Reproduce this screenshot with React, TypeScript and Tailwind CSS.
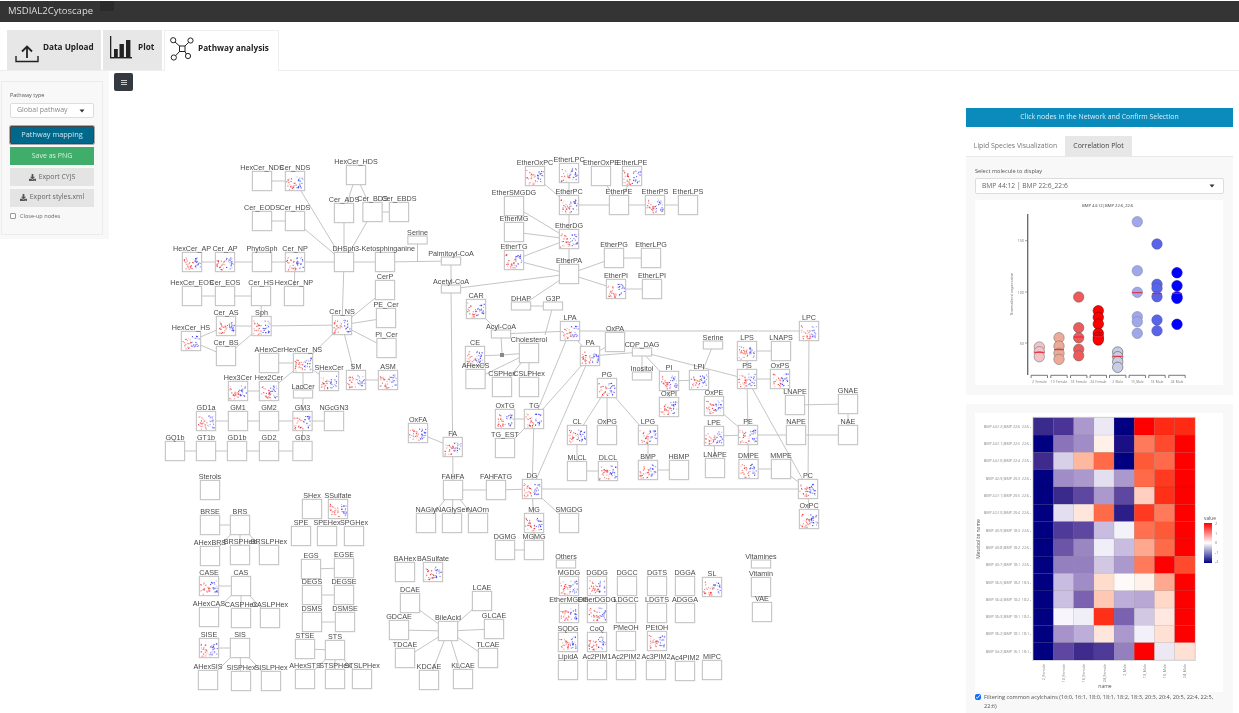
import { FaDownload } from 'react-icons/fa';

type Kind = 'p' | 's' | undefined;
type NodeRow = [string, number, number, Kind?];

// id, centre x, centre y, kind (p = has mini plot, s = flat box). '#2' only makes an id unique
const nodes: NodeRow[] = [
  ['HexCer_NDS', 262, 183], ['Cer_NDS', 295, 183, 'p'], ['HexCer_HDS', 356, 177], ['Cer_ADS', 344, 215],
  ['Cer_BDS', 372.5, 214], ['Cer_EBDS', 399, 214], ['Cer_EODS', 262, 223], ['Cer_HDS', 295, 223],
  ['DHSph', 344, 264], ['3-Ketosphinganine', 385, 264], ['Serine', 417.5, 242, 's'], ['HexCer_AP', 192, 264, 'p'],
  ['Cer_AP', 225, 264, 'p'], ['PhytoSph', 262, 264], ['Cer_NP', 295, 264, 'p'], ['HexCer_EOS', 192, 298],
  ['Cer_EOS', 225, 298], ['Cer_HS', 261, 298], ['HexCer_NP', 294, 298], ['CerP', 385, 292], ['PE_Cer', 386, 320],
  ['PI_Cer', 386.5, 350], ['Cer_AS', 226, 328, 'p'], ['Sph', 261.5, 328, 'p'], ['Cer_NS', 342, 327, 'p'],
  ['HexCer_HS', 191, 343, 'p'], ['Cer_BS', 226, 358], ['AHexCer', 269, 365], ['HexCer_NS', 303, 365, 'p'],
  ['SHexCer', 329, 383, 'p'], ['SM', 356, 382, 'p'], ['ASM', 388, 382, 'p'], ['Hex3Cer', 238, 393, 'p'],
  ['Hex2Cer', 269, 393, 'p'], ['LacCer', 303, 396, 's'], ['GD1a', 206, 423, 'p'], ['GM1', 238, 423], ['GM2', 269, 423],
  ['GM3', 302.5, 423, 'p'], ['NGcGN3', 334, 423], ['GQ1b', 175, 453], ['GT1b', 206, 453], ['GD1b', 237, 453],
  ['GD2', 269, 453], ['GD3', 302.5, 453], ['OxFA', 418, 435, 'p'], ['FA', 452.7, 449, 'p'],
  ['Palmitoyl-CoA', 451, 263, 's'], ['Acetyl-CoA', 451, 291, 's'], ['EtherOxPC', 535, 178, 'p'], ['EtherLPC', 569, 175, 'p'],
  ['EtherOxPE', 601, 178], ['EtherLPE', 632, 178, 'p'], ['EtherSMGDG', 514, 208], ['EtherPC', 569, 207, 'p'],
  ['EtherPE', 619, 207], ['EtherPS', 655, 207, 'p'], ['EtherLPS', 688, 207], ['EtherMG', 514, 234],
  ['EtherDG', 569, 241, 'p'], ['EtherTG', 514, 262, 'p'], ['EtherPG', 614, 260], ['EtherLPG', 651, 260],
  ['EtherPA', 569, 276], ['EtherPI', 616, 291, 'p'], ['EtherLPI', 652, 291], ['DHAP', 521, 308, 's'], ['G3P', 553, 308, 's'],
  ['CAR', 476, 311, 'p'], ['Acyl-CoA', 501, 336, 's'], ['LPA', 570, 333, 'p'], ['OxPA', 615, 344], ['PA', 590, 358, 'p'],
  ['CDP_DAG', 642, 354, 's'], ['CE', 475, 358, 'p'], ['Cholesterol', 529, 355], ['AHexCS', 475.5, 381], ['CSPHex', 502, 389],
  ['CSLPHex', 529, 389], ['Inositol', 642, 378, 's'], ['PG', 607, 390, 'p'], ['PI', 669, 383, 'p'], ['LPI', 699, 382, 'p'],
  ['OxPI', 669, 409, 'p'], ['OxTG', 505, 421, 'p'], ['TG', 534, 421, 'p'], ['TG_EST', 505, 450], ['CL', 577, 437, 'p'],
  ['OxPG', 607, 437], ['LPG', 648, 437, 'p'], ['MLCL', 577, 473], ['DLCL', 608, 473, 'p'], ['BMP', 648, 472, 'p'],
  ['HBMP', 679, 472], ['LNAPE', 715, 470], ['DMPE', 748.5, 471, 'p'], ['MMPE', 781, 471], ['LPE', 714, 438, 'p'],
  ['PE', 748, 437, 'p'], ['OxPE', 714, 408, 'p'], ['Serine#2', 713, 347, 's'], ['LPS', 747, 353, 'p'], ['LNAPS', 781, 353],
  ['PS', 747, 381, 'p'], ['OxPS', 780, 381, 'p'], ['LPC', 809, 333, 'p'], ['LNAPE#2', 795, 407], ['NAPE', 796, 437],
  ['GNAE', 848, 406], ['NAE', 848, 437], ['PC', 808, 491, 'p'], ['OxPC', 809, 521, 'p'], ['FAHFA', 453, 492],
  ['FAHFATG', 496, 492], ['DG', 532, 491, 'p'], ['NAGly', 426, 525], ['NAGlySer', 452, 525], ['NAOrn', 478, 525],
  ['MG', 534, 525, 'p'], ['SMGDG', 569, 525], ['DGMG', 505, 552], ['MGMG', 534, 552], ['BAHex', 405, 574],
  ['BASulfate', 433, 574, 'p'], ['Others', 566, 566, 's'], ['MGDG', 569, 588, 'p'], ['DGDG', 597, 588, 'p'], ['DGCC', 627, 588],
  ['DGTS', 657, 588], ['DGGA', 685, 588], ['SL', 712, 589, 'p'], ['EtherMGDG', 569, 615, 'p'], ['EtherDGDG', 597, 615, 'p'],
  ['LDGCC', 626, 615], ['LDGTS', 657, 615], ['ADGGA', 685, 615], ['SQDG', 568, 644, 'p'], ['CoQ', 597, 644, 'p'],
  ['PMeOH', 626, 643], ['PEtOH', 657, 643, 'p'], ['LipidA', 568, 672], ['Ac2PIM1', 597, 672], ['Ac2PIM2', 626, 672],
  ['Ac3PIM2', 656, 672], ['Ac4PIM2', 685, 673], ['MIPC', 712, 672], ['DCAE', 410, 605], ['LCAE', 482, 603], ['GDCAE', 399, 632],
  ['GLCAE', 494, 631], ['BileAcid', 448, 633], ['TDCAE', 405, 660], ['TLCAE', 488, 660], ['KDCAE', 429, 682], ['KLCAE', 463, 681],
  ['Vitamines', 761, 566, 's'], ['Vitamin', 761, 589], ['VAE', 762, 614], ['Sterols', 210, 492], ['BRSE', 210, 527], ['BRS', 240, 527],
  ['AHexBRS', 210, 558], ['BRSPHex', 240, 557], ['BRSLPHex', 269, 557], ['CASE', 209, 588, 'p'], ['CAS', 241, 588],
  ['AHexCAS', 209, 619], ['CASPHex', 241, 620], ['CASLPHex', 270, 620], ['SISE', 209, 650, 'p'], ['SIS', 240, 650],
  ['AHexSIS', 208, 682], ['SISPHex', 241, 683], ['SISLPHex', 271, 683], ['SHex', 312, 511], ['SSulfate', 338, 511, 'p'],
  ['SPE', 301, 538], ['SPEHex', 327, 538], ['SPGHex', 354, 538], ['EGS', 311, 571], ['EGSE', 344, 570], ['DEGS', 312, 597],
  ['DEGSE', 344, 597], ['DSMS', 312, 624], ['DSMSE', 345, 624], ['STSE', 305, 651], ['STS', 335, 652], ['AHexSTS', 305, 681],
  ['STSPHex', 335, 681], ['STSLPHex', 362, 681],
];

const edges =
  `HexCer_NDS-Cer_NDS Cer_NDS-DHSph HexCer_HDS-Cer_ADS HexCer_HDS-Cer_BDS Cer_ADS-DHSph Cer_BDS-DHSph Cer_BDS-Cer_EBDS
  Cer_EODS-Cer_HDS Cer_HDS-DHSph DHSph-3-Ketosphinganine 3-Ketosphinganine-Palmitoyl-CoA Palmitoyl-CoA-Acetyl-CoA
  HexCer_AP-Cer_AP Cer_AP-PhytoSph PhytoSph-Cer_NP Cer_NP-DHSph Cer_NP-HexCer_NP HexCer_EOS-Cer_EOS Cer_EOS-Cer_HS Cer_HS-Sph
  DHSph-Cer_NS Cer_NS-CerP Cer_NS-PE_Cer Cer_NS-PI_Cer Cer_NS-SM SM-ASM Cer_NS-HexCer_NS Cer_NS-Sph Sph-Cer_AS Sph-Cer_BS
  Cer_AS-HexCer_HS Cer_BS-HexCer_HS AHexCer-HexCer_NS HexCer_NS-SHexCer HexCer_NS-LacCer Hex2Cer-HexCer_NS Hex3Cer-Hex2Cer
  LacCer-GM3 GD1a-GM1 GM1-GM2 GM2-GM3 GM3-NGcGN3 GM3-GD3 GQ1b-GT1b GT1b-GD1b GD1b-GD2 GD2-GD3 Acetyl-CoA-FA OxFA-FA FA-FAHFA
  FAHFA-FAHFATG FAHFATG-DG FAHFA-NAGly FAHFA-NAGlySer FAHFA-NAOrn Acetyl-CoA-EtherPA EtherOxPC-EtherPC EtherLPC-EtherPC
  EtherOxPE-EtherPE EtherPC-EtherPE EtherPE-EtherPS EtherLPE-EtherPE EtherPS-EtherLPS EtherPC-EtherDG EtherSMGDG-EtherDG
  EtherMG-EtherDG EtherTG-EtherDG EtherTG-EtherPA EtherDG-EtherPA EtherPA-EtherPG EtherPG-EtherLPG EtherPA-EtherPI
  EtherPI-EtherLPI EtherPA-DHAP DHAP-G3P Acyl-CoA-LPA CAR-Acyl-CoA AHexCS-Cholesterol CSPHex-Cholesterol CSLPHex-Cholesterol
  LPA-PA PA-CDP_DAG LPA-LPC LPA-TG PA-TG PA-DG TG-DG TG-OxTG TG-TG_EST PG-CL PG-OxPG PG-LPG CDP_DAG-PI PI-LPI CDP_DAG-PS
  CDP_DAG-Inositol Serine#2-LPI LPS-LNAPS PS-OxPS PS-PE PS-PC OxPE-PE LPE-PE LPE-LNAPE PE-NAPE PE-DMPE DMPE-MMPE MMPE-PC
  NAPE-NAE LNAPE#2-GNAE NAE-GNAE LPC-PC PC-OxPC CL-MLCL MLCL-DLCL LPG-BMP BMP-HBMP DG-PC DG-SMGDG DG-MG MG-MGMG DGMG-MGMG
  PI-OxPI LPS-PS OxPA-PA BRSE-BRS BRS-AHexBRS BRS-BRSPHex BRS-BRSLPHex CASE-CAS CAS-AHexCAS CAS-CASPHex CAS-CASLPHex SISE-SIS
  SIS-AHexSIS SIS-SISPHex SIS-SISLPHex STSE-STS STS-AHexSTS STS-STSPHex STS-STSLPHex EGS-EGSE DEGS-DEGSE DSMS-DSMSE
  BileAcid-DCAE BileAcid-LCAE BileAcid-GDCAE BileAcid-GLCAE BileAcid-TDCAE BileAcid-TLCAE BileAcid-KDCAE BileAcid-KLCAE`
    .split(/\s+/);

// edges that end on another edge or on the small junction dot
const freeLines = [
  [417.5, 242, 417.5, 264], [553, 308, 545, 337], [475, 358, 502, 357], [502, 357, 529, 355], [501, 336, 502, 357],
];

const byName = new Map(nodes.map((n) => [n[0], n]));

function findEdge(edge: string) {
  // names can hold a dash themselves, so try every dash as the split
  for (let i = edge.indexOf('-'); i >= 0; i = edge.indexOf('-', i + 1)) {
    const a = byName.get(edge.slice(0, i));
    const b = byName.get(edge.slice(i + 1));
    if (a && b) return [a, b];
  }
  return null;
}

function MiniPlot({ name, x, y }: { name: string; x: number; y: number }) {
  let seed = 7;
  for (const c of name) seed = (seed * 31 + c.charCodeAt(0)) % 9973;
  const rnd = () => {
    seed = (seed * 137 + 59) % 9973;
    return seed / 9973;
  };
  const dots = [];
  for (let i = 0; i < 24; i++) {
    const dx = rnd() * 9.5 + 0.8;
    const dy = 17.5 - rnd() * (15 - dx * 0.6);
    dots.push(<rect key={`r${i}`} x={x + dx} y={y + dy} width={1.1} height={1.1} fill="#ee3030" opacity={0.25 + rnd() * 0.75} />);
  }
  for (let i = 0; i < 20; i++) {
    const dx = rnd() * 7 + 10.5;
    const dy = rnd() * 12 + 4;
    dots.push(<rect key={`b${i}`} x={x + dx} y={y + dy} width={1.1} height={1.1} fill="#3030ee" opacity={0.25 + rnd() * 0.75} />);
  }
  return <g>{dots}</g>;
}

function Network() {
  return (
    <svg viewBox="109 73 857 640" width={857} height={640} className="block">
      <g stroke="#bdbdbd" strokeWidth={0.9}>
        {edges.map((e) => {
          const pair = findEdge(e);
          if (!pair) return null;
          return <line key={e} x1={pair[0][1]} y1={pair[0][2]} x2={pair[1][1]} y2={pair[1][2]} />;
        })}
        {freeLines.map((l, i) => (
          <line key={i} x1={l[0]} y1={l[1]} x2={l[2]} y2={l[3]} />
        ))}
      </g>
      <rect x={500} y={355} width={4} height={4} fill="#888" />
      {nodes.map(([name, x, y, kind]) => {
        const h = kind === 's' ? 8 : 19.3;
        return (
          <g key={name}>
            <rect x={x - 9.65} y={y - h / 2} width={19.3} height={h} fill="#fff" stroke="#c4c4c4" strokeWidth={1.1} />
            {kind === 'p' && <MiniPlot name={name} x={x - 9.65} y={y - 9.65} />}
          </g>
        );
      })}
      <g fontFamily="'Liberation Sans', sans-serif" fontSize={7.2} fill="#4a4a4a" textAnchor="middle">
        {nodes.map(([name, x, y, kind]) => (
          <text key={name} x={x} y={y - (kind === 's' ? 8 : 14) + 3.2}>
            {name.split('#')[0]}
          </text>
        ))}
      </g>
    </svg>
  );
}

const groups = ['2_Female', '10_Female', '18_Female', '24_Female', '2_Male', '10_Male', '18_Male', '24_Male'];

const swarm: { cx: number; fill: string; stroke: string; ys: number[]; mid: number }[] = [
  { cx: 1039.3, fill: '#f4c2c9', stroke: '#777', ys: [347, 351.7, 356.7], mid: 352.3 },
  { cx: 1059, fill: '#eeaa96', stroke: '#777', ys: [337.7, 346, 353.3, 359.3], mid: 349.7 },
  { cx: 1078.7, fill: '#ee5a5a', stroke: '#666', ys: [297, 327.7, 337.7, 349.3, 355.7], mid: 337 },
  { cx: 1098.3, fill: '#ff0000', stroke: '#700', ys: [310.7, 317.3, 324, 333.3, 337.3, 340], mid: 336.7 },
  { cx: 1117.7, fill: '#c8cfe5', stroke: '#555', ys: [352, 356.7, 361.7, 367.3], mid: 356.3 },
  { cx: 1137.3, fill: '#a0a8ea', stroke: '#8088b0', ys: [221.7, 270.7, 292.3, 316.7, 321.7, 333.3], mid: 292.7 },
  { cx: 1157, fill: '#5a64e8', stroke: '#5058a8', ys: [244, 284.3, 288.3, 296.7, 320, 330.7], mid: 293.7 },
  { cx: 1177, fill: '#0000ff', stroke: '#0000c0', ys: [272.7, 285.7, 296.7, 298.3, 324.3], mid: 293.3 },
];

function SwarmPlot() {
  return (
    <svg viewBox="975 200 248 185" width={248} height={185} className="block bg-white" fontFamily="'Open Sans', sans-serif">
      <text x={1107.7} y={206.5} fontSize={4.2} fill="#444" textAnchor="middle">BMP 44:12|BMP 22:6_22:6</text>
      <line x1={1027.7} y1={214} x2={1027.7} y2={375} stroke="#666" strokeWidth={1.3} />
      {[['150', 240.7], ['100', 292], ['50', 343]].map(([t, y]) => (
        <g key={t}>
          <line x1={1025} x2={1027.7} y1={y} y2={y} stroke="#666" strokeWidth={0.6} />
          <text x={1024} y={Number(y) + 1.5} fontSize={3.8} fill="#777" textAnchor="end">{t}</text>
        </g>
      ))}
      <text transform="translate(1013 294) rotate(-90)" fontSize={4} fill="#777" textAnchor="middle">Normalized expression</text>
      {swarm.map((s, i) => (
        <g key={i}>
          {s.ys.map((y, j) => (
            <circle key={j} cx={s.cx} cy={y} r={5.2} fill={s.fill} stroke={s.stroke} strokeWidth={0.6} />
          ))}
          <line x1={s.cx - 5} x2={s.cx + 5} y1={s.mid} y2={s.mid} stroke="#f01c2c" strokeWidth={1} />
          <path d={`M${s.cx - 8.2} 378V375.3H${s.cx + 8.2}V378`} fill="none" stroke="#555" strokeWidth={0.8} />
          <text x={s.cx} y={382.5} fontSize={3.3} fill="#777" textAnchor="middle">{groups[i]}</text>
        </g>
      ))}
    </svg>
  );
}

const heatRows: [string, string[]][] = [
  ['BMP 44:12|BMP 22:6_22:6', ['#3a2a8c', '#4a3596', '#ab98cc', '#ece9f4', '#000080', '#ff0000', '#ff2a14', '#ff2a14']],
  ['BMP 44:11|BMP 22:5_22:6', ['#000080', '#8a73b8', '#a08cc6', '#fff0e8', '#1a0f84', '#ff7a5a', '#ff4a2e', '#ff0000']],
  ['BMP 44:10|BMP 22:4_22:6', ['#3f2b8e', '#d8d0e8', '#ffb8a0', '#ff6a48', '#000080', '#ff5a38', '#ff6a4a', '#ff0000']],
  ['BMP 42:9|BMP 20:3_22:6', ['#000080', '#a08cc6', '#ab98cc', '#e4dff0', '#ab98cc', '#ff6a48', '#ff3a20', '#ff0000']],
  ['BMP 42:11|BMP 20:5_22:6', ['#000080', '#3a2a8c', '#5e47a0', '#ab98cc', '#5e47a0', '#ffd0c0', '#ff2f18', '#ff0000']],
  ['BMP 42:10|BMP 20:4_22:6', ['#000080', '#e4dff0', '#ffe6dc', '#ff6a48', '#2c1e88', '#ff3a20', '#ff7a5a', '#ff0000']],
  ['BMP 40:9|BMP 18:3_22:6', ['#000080', '#4e3a98', '#5e47a0', '#c8bce0', '#f4f2f9', '#ff7050', '#ff5a38', '#ff0000']],
  ['BMP 40:8|BMP 18:2_22:6', ['#000080', '#6a55a8', '#9a86c0', '#f0eef7', '#c8bce0', '#ffa890', '#ff6a48', '#ff0000']],
  ['BMP 40:7|BMP 18:1_22:6', ['#000080', '#9480be', '#9480be', '#d2c8e4', '#ab98cc', '#ff7a5a', '#ff0000', '#ff4a2e']],
  ['BMP 36:5|BMP 18:2_18:3', ['#000080', '#c8bce0', '#a08cc6', '#ffdccc', '#fffafa', '#fff2ec', '#ffa890', '#ff0000']],
  ['BMP 36:4|BMP 18:2_18:2', ['#000080', '#ccc0e2', '#7a62b0', '#ffc8b4', '#bcaed8', '#b8a6d4', '#ffd8c8', '#ff0000']],
  ['BMP 36:3|BMP 18:1_18:2', ['#000080', '#f8f6fc', '#f0eef7', '#ff3018', '#7a62b0', '#d2c8e4', '#ffe8e0', '#ff0000']],
  ['BMP 36:2|BMP 18:1_18:1', ['#000080', '#a892ca', '#bcaed8', '#ffe6dc', '#ab98cc', '#f2f0f8', '#ffe0d4', '#ff0000']],
  ['BMP 34:2|BMP 16:1_18:1', ['#000080', '#5e47a0', '#3f2b8e', '#4e3a98', '#9480be', '#ff0000', '#ece9f4', '#ffe0d4']],
];

function Heatmap() {
  const cw = 20.2;
  const ch = 17.3;
  const left = 1033.3;
  const top = 417.8;
  return (
    <svg viewBox="975 413 248 279" width={248} height={279} className="block bg-white" fontFamily="'Open Sans', sans-serif">
      <defs>
        <linearGradient id="valueScale" x1="0" y1="0" x2="0" y2="1">
          <stop offset="0" stopColor="#ff0000" />
          <stop offset="0.5" stopColor="#ffffff" />
          <stop offset="1" stopColor="#000080" />
        </linearGradient>
      </defs>
      <rect x={left - 1} y={top - 1} width={cw * 8 + 2} height={ch * 14 + 2} fill="#ddd" />
      {heatRows.map(([label, cells], r) => (
        <g key={label}>
          <text x={left - 2} y={top + ch * r + ch / 2 + 1.4} fontSize={3.7} fill="#888" textAnchor="end">{label} -</text>
          {cells.map((c, i) => (
            <rect key={i} x={left + i * cw} y={top + r * ch} width={cw} height={ch} fill={c} stroke="#00000022" strokeWidth={0.4} />
          ))}
        </g>
      ))}
      {groups.map((g, i) => (
        <text key={g} transform={`translate(${left + cw * i + cw / 2 + 1.5} 664) rotate(-90)`} fontSize={3.7} fill="#888" textAnchor="end">{g}</text>
      ))}
      <text x={1105} y={688} fontSize={5} fill="#555" textAnchor="middle">name</text>
      <text transform="translate(980 539) rotate(-90)" fontSize={5} fill="#555" textAnchor="middle">Metabolite name</text>
      <text x={1204} y={520} fontSize={4.8} fill="#555">value</text>
      <rect x={1204} y={523} width={8} height={40} fill="url(#valueScale)" />
      {[['2', 525], ['1', 534.5], ['0', 544], ['-1', 553.5], ['-2', 563]].map(([t, y]) => (
        <text key={t} x={1215} y={y} fontSize={3.8} fill="#777">{t}</text>
      ))}
    </svg>
  );
}

function Caret() {
  return (
    <svg width={6} height={4} viewBox="0 0 6 4" className="shrink-0">
      <path d="M0.5 0.5H5.5L3 3.5Z" fill="#333" />
    </svg>
  );
}

function UploadIcon() {
  return (
    <svg width={24} height={18} viewBox="0 0 24 18" fill="none" stroke="#222" strokeWidth={1.4}>
      <path d="M1 11V16.5H23V11" />
      <path d="M12 13V1.5" strokeWidth={1.8} />
      <path d="M7 6.5L12 1.5L17 6.5" strokeWidth={1.8} />
    </svg>
  );
}

function BarsIcon() {
  return (
    <svg width={22} height={23} viewBox="0 0 22 23" fill="#222">
      <rect x={0} y={0} width={1.3} height={22} />
      <rect x={0} y={21} width={22} height={1.4} />
      <rect x={4} y={13} width={3.8} height={8} />
      <rect x={9.5} y={8} width={4.4} height={13} />
      <rect x={16} y={4} width={4.4} height={17} />
    </svg>
  );
}

function NetworkIcon() {
  return (
    <svg width={24} height={24} viewBox="0 0 24 24" fill="none" stroke="#222" strokeWidth={1}>
      <rect x={9.5} y={9} width={5.5} height={5.5} />
      <circle cx={3.2} cy={3.2} r={2.6} />
      <circle cx={20.5} cy={3.5} r={2.6} />
      <circle cx={3.8} cy={20.5} r={2.6} />
      <circle cx={18} cy={19} r={2.6} />
      <path d="M5 5L9.5 9M18.7 5.3L15 9M5.6 18.7L9.5 14.5M16.3 17.2L15 14.5" />
    </svg>
  );
}

function ActionButton({ label }: { label: string }) {
  return (
    <button className="flex h-[18px] items-center justify-center gap-[3px] bg-[#e4e4e4] text-[6.9px] text-[#666]">
      <FaDownload className="h-[7px] w-[7px] text-[#555]" />
      {label}
    </button>
  );
}

export default function App() {
  return (
    <div className="flex h-[713px] w-[1239px] flex-col overflow-hidden bg-white font-['Open_Sans',sans-serif] blur-[0.35px]">
      <header className="mt-px flex h-[21px] shrink-0 items-start bg-[#343434]">
        <span className="ml-[8px] mt-[4px] text-[9.5px] leading-[12px] text-[#dedede]">MSDIAL2Cytoscape</span>
        <span className="ml-[7px] h-[10px] w-[14px] bg-[#2a2a2a]" />
      </header>

      <nav className="flex h-[49px] shrink-0 items-end gap-[2px] border-b border-[#eee] pl-[7px]">
        <div className="flex h-[40px] w-[94px] items-center bg-[#e7e7e7] pl-[8px]">
          <span className="mt-[7px]"><UploadIcon /></span>
          <span className="-mt-[6px] ml-[4px] text-[8.2px] font-bold text-[#222]">Data Upload</span>
        </div>
        <div className="flex h-[40px] w-[59px] items-center bg-[#e7e7e7] pl-[7px]">
          <span className="-mt-[5px]"><BarsIcon /></span>
          <span className="-mt-[6px] ml-[6px] text-[8.2px] font-bold text-[#222]">Plot</span>
        </div>
        <div className="-mb-px flex h-[41px] w-[115px] items-center border border-b-0 border-[#eee] bg-white pl-[5px]">
          <span className="-mt-[4px]"><NetworkIcon /></span>
          <span className="-mt-[6px] ml-[4px] text-[8.2px] font-bold text-[#222]">Pathway analysis</span>
        </div>
      </nav>

      <main className="relative flex min-h-0 flex-1">
        <aside className="h-[168px] w-[109px] shrink-0 bg-[#f8f8f8] pl-[1px] pt-[10px]">
          <div className="flex h-[154px] w-[102px] flex-col border border-[#ececec] px-[8px] pt-[9px]">
            <label className="text-[5.5px] leading-[9px] text-[#555]">Pathway type</label>
            <div className="mt-[3px] flex h-[15px] items-center justify-between rounded-[2px] border border-[#ddd] bg-white pl-[6px] pr-[8px] text-[7px] text-[#888]">
              Global pathway
              <Caret />
            </div>
            <button className="mt-[8px] h-[18px] rounded-[1px] border-[1.5px] border-[#444] bg-[#00688b] text-[7.4px] text-[#cfe6ee] outline outline-1 outline-[#aaa]">
              Pathway mapping
            </button>
            <button className="mt-[3px] h-[18px] bg-[#41ad6a] text-[7px] text-[#d8f0e0]">Save as PNG</button>
            <div className="mt-[3px] flex flex-col gap-[2.5px]">
              <ActionButton label="Export CYJS" />
              <ActionButton label="Export styles.xml" />
            </div>
            <label className="mt-[5px] flex items-center gap-[4px] text-[5.6px] text-[#666]">
              <input type="checkbox" className="m-0 h-[6px] w-[6px] appearance-none rounded-[1px] border border-[#999] bg-white" />
              Close-up nodes
            </label>
          </div>
        </aside>

        <section className="relative w-[857px] shrink-0">
          <Network />
          <button className="absolute left-[5px] top-[2px] flex h-[18px] w-[19px] flex-col items-center justify-center gap-px rounded-[2px] bg-[#343a40]">
            <span className="h-px w-[6px] bg-[#ccc]" />
            <span className="h-px w-[6px] bg-[#ccc]" />
            <span className="h-px w-[6px] bg-[#ccc]" />
          </button>
        </section>

        <aside className="flex w-[267px] shrink-0 flex-col pt-[37px]">
          <button className="h-[19px] shrink-0 bg-[#0b8bbb] text-[6.9px] text-[#d9eff7]">
            Click nodes in the Network and Confirm Selection
          </button>
          <div className="mt-[9px] flex h-[21px] shrink-0 border-b border-[#e8e8e8] text-[6.9px] text-[#777]">
            <span className="flex w-[99px] items-center justify-center bg-white">Lipid Species Visualization</span>
            <span className="flex w-[67px] items-center justify-center bg-[#e7e7e7] text-[#444]">Correlation Plot</span>
          </div>
          <div className="h-[238px] shrink-0 bg-[#f8f8f8] px-[9px] pt-[10px]">
            <label className="block text-[5.6px] leading-[8px] text-[#555]">Select molecule to display</label>
            <div className="mt-[3px] flex h-[16px] items-center justify-between rounded-[2px] border border-[#ddd] bg-white pl-[6px] pr-[8px] text-[6.7px] text-[#666]">
              BMP 44:12 | BMP 22:6_22:6
              <Caret />
            </div>
            <div className="mt-[6px]">
              <SwarmPlot />
            </div>
          </div>
          <div className="mt-[9px] flex-1 bg-[#f8f8f8] px-[9px] pt-[9px]">
            <Heatmap />
            <label className="mt-[1px] flex items-start gap-[3px] pr-[6px] text-[5.6px] leading-[9px] text-[#555]">
              <input type="checkbox" defaultChecked className="m-0 mt-[1px] h-[6px] w-[6px] shrink-0 accent-[#0d6efd]" />
              Filtering common acylchains (16:0, 16:1, 18:0, 18:1, 18:2, 18:3, 20:3, 20:4, 20:5, 22:4, 22:5, 22:6)
            </label>
          </div>
        </aside>
      </main>
    </div>
  );
}
